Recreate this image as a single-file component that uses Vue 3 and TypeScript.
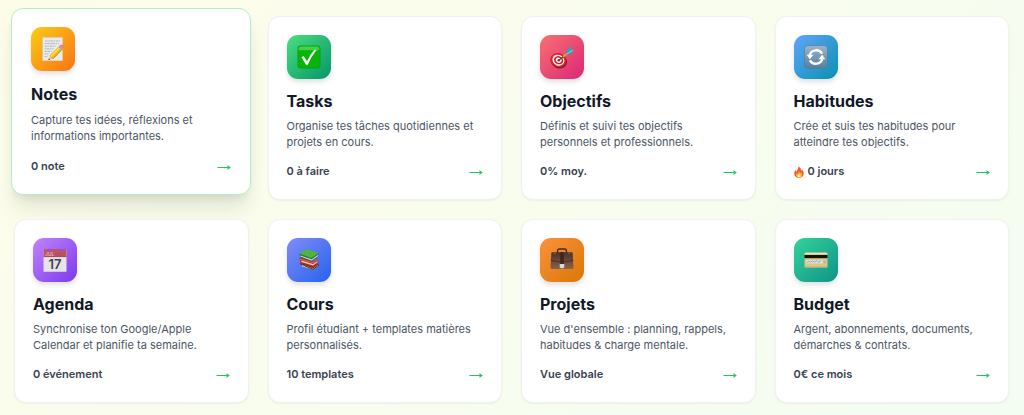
<script setup lang="ts">
type IconName = 'notes' | 'tasks' | 'goals' | 'habits' | 'agenda' | 'courses' | 'projects' | 'budget'

interface Feature {
  id: IconName
  title: string
  lines: [string, string]
  stat: string
  fire?: boolean
  active?: boolean
}

const features: Feature[] = [
  { id: 'notes', title: 'Notes', lines: ['Capture tes idées, réflexions et', 'informations importantes.'], stat: '0 note', active: true },
  { id: 'tasks', title: 'Tasks', lines: ['Organise tes tâches quotidiennes et', 'projets en cours.'], stat: '0 à faire' },
  { id: 'goals', title: 'Objectifs', lines: ['Définis et suivi tes objectifs', 'personnels et professionnels.'], stat: '0% moy.' },
  { id: 'habits', title: 'Habitudes', lines: ['Crée et suis tes habitudes pour', 'atteindre tes objectifs.'], stat: '0 jours', fire: true },
  { id: 'agenda', title: 'Agenda', lines: ['Synchronise ton Google/Apple', 'Calendar et planifie ta semaine.'], stat: '0 événement' },
  { id: 'courses', title: 'Cours', lines: ['Profil étudiant + templates matières', 'personnalisés.'], stat: '10 templates' },
  { id: 'projects', title: 'Projets', lines: ["Vue d'ensemble : planning, rappels,", 'habitudes & charge mentale.'], stat: 'Vue globale' },
  { id: 'budget', title: 'Budget', lines: ['Argent, abonnements, documents,', 'démarches & contrats.'], stat: '0€ ce mois' },
]
</script>

<template>
  <main class="page">
    <a v-for="f in features" :key="f.id" class="card" :class="{ active: f.active }" :href="'#' + f.id">
      <span class="tile" :class="f.id">
        <svg class="glyph" viewBox="0 0 24 24" aria-hidden="true">
          <template v-if="f.id === 'notes'">
            <rect x="1.6" y="0.4" width="20" height="23.4" fill="#e9eaec" stroke="#cfc9b8" stroke-width=".5" />
            <g stroke="#a3a6ab" stroke-width=".8" fill="none">
              <path stroke-dasharray="2.6 .7 1.4 .6" d="M4 4h15" />
              <path stroke-dasharray="1.4 .6 3 .7" d="M3.6 6.6h14" />
              <path stroke-dasharray="3 .6 1 .6" d="M3.6 9.2h11" />
              <path stroke-dasharray="1.6 .7 2.4 .5" d="M3.6 11.8h9" />
              <path stroke-dasharray="2.4 .7" d="M3.6 14.4h7" />
              <path stroke-dasharray="1.4 .6" d="M3.6 17h4.4" />
              <path stroke-dasharray="2 .6" d="M3.6 19.6h3" />
            </g>
            <path d="M8.6 19 7.4 23l4.8-1.2z" fill="#e8c99a" />
            <path d="m7.9 21.4-.5 1.7 1.9-.5z" fill="#333" />
            <path d="M8.5 18.6 18 9.2l3.4 3.4-9.2 9.3-2-.7z" fill="#f2b619" />
            <path d="m9.2 18.9 9.6-9.3 1.1 1.1-9.6 9.6z" fill="#ffdc4b" />
            <path d="m11.8 21.9 9.2-9.3" stroke="#b97b13" stroke-width=".7" />
            <path d="m17.4 9.8 1.5-1.4 3.3 3.3-1.5 1.5z" fill="#9daab5" />
            <path d="m18.7 8.5.8-.7c1.9-.9 4 1.2 3.2 3l-.8.9z" fill="#f07c87" />
          </template>
          <template v-else-if="f.id === 'tasks'">
            <rect x=".5" y=".5" width="23" height="23" rx="3.4" fill="#0a9b16" />
            <rect x="1.3" y="1.2" width="21.4" height="21.4" rx="2.8" fill="#05b50a" />
            <path d="M3.6 1.4h16.8q2 .3 2 2.4v1.4H1.6V3.8q0-2.1 2-2.4z" fill="#46cf43" />
            <path d="M4.4 12.3 6.6 11l3.4 5.2Q13 9.600 17.500 4.800l2 .3Q14 12 10.700 19.700H9z" fill="#fff" />
          </template>
          <template v-else-if="f.id === 'goals'">
            <ellipse cx="8.800" cy="16" rx="8.400" ry="7.300" transform="rotate(28 8.800 16)" fill="#8d1420" />
            <ellipse cx="8.200" cy="15.200" rx="8" ry="6.900" transform="rotate(28 8.200 15.200)" fill="#d8242f" />
            <ellipse cx="8.400" cy="15.200" rx="6.200" ry="5.300" transform="rotate(28 8.400 15.200)" fill="#f7f1ee" />
            <ellipse cx="8.600" cy="15.200" rx="4.700" ry="4" transform="rotate(28 8.600 15.200)" fill="#cf202d" />
            <ellipse cx="8.700" cy="15.200" rx="3" ry="2.500" transform="rotate(28 8.700 15.200)" fill="#fff" />
            <circle cx="8.800" cy="15.200" r="1.300" fill="#c51b29" />
            <path d="m9 15 6.500-4.800" stroke="#393f4b" stroke-width="1.100" />
            <path d="m13 11.800 5.300-4" stroke="#e0a72b" stroke-width="2" />
            <path d="m16.200 8.800 1-3.600 3.500-4.600.4 3.700 2.900.9-3.500 3.600-3.600 1z" fill="#28a8b9" />
            <path d="m17 8.800 5.800-3.500" stroke="#78dce3" stroke-width="1" />
          </template>
          <template v-else-if="f.id === 'habits'">
            <defs>
              <linearGradient id="habit-face" x1="0" y1="0" x2="0" y2="1">
                <stop offset="0" stop-color="#9db4c6" />
                <stop offset="1" stop-color="#557f9f" />
              </linearGradient>
            </defs>
            <rect x=".5" y=".5" width="23" height="23" rx="3.400" fill="url(#habit-face)" stroke="#547994" stroke-width=".6" />
            <g fill="none" stroke="#fff" stroke-width="2.300">
              <path d="M5.600 10.500C7 4.200 15.200 3.600 18.100 8.600" />
              <path d="M18.400 13.500C17 19.800 8.800 20.400 5.900 15.400" />
            </g>
            <path d="M2.700 9.800h6.800l-3.700 4.500zM21.300 14.200h-6.800l3.700-4.500z" fill="#fff" />
          </template>
          <template v-else-if="f.id === 'agenda'">
            <rect x=".5" y="1" width="23" height="22.800" rx=".5" fill="#e5e4e8" />
            <path d="M.5 1h23v8H.5z" fill="#bd5560" />
            <path d="M.5 8.700h23" stroke="#964450" stroke-width=".5" />
            <circle cx="6" cy="2" r="1.500" fill="#8755ed" />
            <circle cx="18" cy="2" r="1.500" fill="#8755ed" />
            <text class="month" x="2" y="8.300">JUL</text>
            <path d="M12.500 5.500h9M12.500 7.200h9" stroke="#9b4954" stroke-width=".7" stroke-dasharray="1 .7" />
            <text class="day" x="12" y="20.500">17</text>
          </template>
          <template v-else-if="f.id === 'courses'">
            <path d="m4 16.800 12 5 5.500-4v-2L9 12.500l-4.500 2z" fill="#753e26" />
            <path d="m5 16.500 11.200 3.900 4.800-3.700v1.500l-4.800 3.400L5 18.300z" fill="#e0d2bb" />
            <path d="m3 15.600 13 5.700 5.800-4.200" fill="none" stroke="#4a3028" stroke-width="1" />
            <path d="m2.500 9.200 14 4.200 3.900-2.600v5l-4.300 3.200-12.800-4.600z" fill="#b9242c" />
            <path d="m4.300 12.600 11.800 3.500 4.200-2.900v1.300L16 17.400 4.300 13.900z" fill="#e6cdbb" />
            <path d="m3 11.200 13.200 3.400 4.300-3" fill="none" stroke="#ed5048" stroke-width="1.400" />
            <path d="M2.100 5.500 9.800 1.200l11.800 3.700-7.100 5.200z" fill="#4eb53d" />
            <path d="m2 5.500 12.500 4.600 7.100-5.200v1.200l-6.700 5.200L3 7.900z" fill="#2c7c30" />
            <path d="m3.300 7.400 11.400 4.200 6.300-4.600v1.300l-6.200 4.400L3.200 8.600z" fill="#d5dcbf" />
            <path d="m3 8.900 11.600 4.400 6.600-4.600" fill="none" stroke="#246b2a" stroke-width=".8" />
          </template>
          <template v-else-if="f.id === 'projects'">
            <defs>
              <linearGradient id="case-face" x1="0" y1="0" x2="0" y2="1">
                <stop offset="0" stop-color="#4b3028" />
                <stop offset="1" stop-color="#8a6349" />
              </linearGradient>
            </defs>
            <path d="M7.600 5V2.800q0-1.700 1.700-1.700h5.400q1.700 0 1.700 1.700V5" fill="none" stroke="#4b2b23" stroke-width="1.500" />
            <path d="M1.300 5.200q0-1 1-1h19.400q1 0 1 1l.8 14.600q0 1.300-1.300 1.300H1.800q-1.300 0-1.300-1.300z" fill="url(#case-face)" />
            <path d="M.8 11.800q11.200 3.200 22.400 0v1q-11.200 3.200-22.400 0z" fill="#44302a" />
            <path d="M10.200 4h3.600v12h-3.600z" fill="#3d2723" />
            <path d="M9.700 16h4.600v3.600l-2.300.8-2.300-.8z" fill="#ddd7ce" />
            <path d="M3.800 5.500h2M18.200 5.500h2" stroke="#9a7555" stroke-width=".7" />
          </template>
          <template v-else>
            <rect x=".5" y="4.500" width="23" height="15.300" rx="1" fill="#d8c88f" />
            <path d="M.5 7h23v3.200H.5z" fill="#16110d" />
            <path d="M1.500 5.500h21" stroke="#ede2ad" stroke-width="1.300" />
            <path d="M2.300 12.200h16.500v3.200H2.300z" fill="#e1e2d8" />
            <path d="m3 14.500 2-1.200 1.500 1 2-1.200 2.200 1.200 2-1.600 2 1.600 2-1.400" fill="none" stroke="#7591b2" stroke-width=".7" />
            <path d="M19.500 13.200h2M19.500 14.700h2" stroke="#a9a184" stroke-width=".7" />
            <path d="M1 19.200h22" stroke="#ad9d68" stroke-width=".8" />
          </template>
        </svg>
      </span>
      <h3>{{ f.title }}</h3>
      <p>{{ f.lines[0] }}<br />{{ f.lines[1] }}</p>
      <span class="foot">
        <span class="stat">
          <svg v-if="f.fire" class="fire" viewBox="0 0 10 12" aria-hidden="true">
            <path d="M4.400.3C7 1.700 7 3.600 7 5q.8-.7.700-1.800C9.100 4.600 9.800 6.300 9.700 8 9.500 10.400 7.600 11.800 5 11.800S.4 10.300.3 7.900C.2 6.100 1 4.700 1.600 3.800q.1 1.500.9 2.200C2.600 4.400 4.900 2.900 4.400.3z" fill="#fb5526" />
            <path d="M5.200 4.700q-.1 1.500.9 2.600.7-.3.900-1 1.300 1.600 1.100 3C7.900 10.800 6.700 11.500 5.100 11.500c-1.800 0-3-1-3.100-2.500q0-1.300.6-2 .4 1 1.200 1.100C3.800 6.900 5 6.200 5.200 4.700z" fill="#ffb52e" />
            <path d="M5.200 7.800c.2 1 1.500 1.300 1.300 2.300-.1.800-.7 1.200-1.500 1.200s-1.500-.5-1.500-1.300C3.500 9 5 8.900 5.200 7.800z" fill="#fff09a" />
          </svg>
          {{ f.stat }}
        </span>
        <svg class="arrow" viewBox="0 0 14 8" aria-hidden="true">
          <path d="M.5 4.500h11" />
          <path class="head" d="m10.300 2 3.500 2.500L10.300 7l.5-2.500z" />
        </svg>
      </span>
    </a>
  </main>
</template>

<style>
body {
  margin: 0;
}
</style>

<style scoped>
.page {
  box-sizing: border-box;
  min-height: 100vh;
  padding: 16px 15px 11px 14px;
  display: grid;
  grid-template-columns: repeat(4, minmax(0, 1fr));
  align-content: start;
  gap: 19px;
  background: linear-gradient(135deg, #fdfce9, #f3fdf2);
  font-family: Inter, "Liberation Sans", sans-serif;
}
.card {
  display: flex;
  flex-direction: column;
  align-items: flex-start;
  padding: 18px;
  border: 1px solid #f0f1f0;
  border-radius: 12px;
  background: #fff;
  box-shadow: 0 1px 2px rgb(0 0 0 / 5%);
  color: #4b5563;
  text-decoration: none;
}
.card.active {
  margin: -8px -2px 5px -3px;
  padding: 18px 19px 17px;
  border-color: #b0f0c5;
  box-shadow: 0 16px 20px -4px rgb(40 40 20 / 11%), 0 6px 8px -4px rgb(40 40 20 / 10%);
}
.tile {
  width: 44px;
  height: 44px;
  display: grid;
  place-items: center;
  border-radius: 11px;
  box-shadow: 0 3px 5px rgb(0 0 0 / 12%);
}
.glyph {
  width: 24px;
  height: 24px;
}
.notes { background: linear-gradient(135deg, #facc15, #f97316); }
.tasks { background: linear-gradient(135deg, #4ade80, #059669); }
.goals { background: linear-gradient(135deg, #f87171, #db2777); }
.habits { background: linear-gradient(135deg, #60a5fa, #0891b2); }
.agenda { background: linear-gradient(135deg, #c084fc, #7c3aed); }
.courses { background: linear-gradient(135deg, #818cf8, #2563eb); }
.projects { background: linear-gradient(135deg, #fb923c, #d97706); }
.budget { background: linear-gradient(135deg, #34d399, #0d9488); }
.month {
  font-size: 5px;
  font-weight: 600;
  fill: #dfb0b6;
}
.day {
  font-size: 13px;
  font-weight: 600;
  fill: #42404a;
  text-anchor: middle;
}
h3 {
  margin: 11px 0 6px;
  font-size: 16px;
  line-height: 22px;
  font-weight: 700;
  color: #111827;
}
p {
  margin: 0;
  font-size: 11px;
  line-height: 16px;
  white-space: nowrap;
}
.foot {
  align-self: stretch;
  margin-top: 12px;
  display: flex;
  align-items: center;
  justify-content: space-between;
}
.active h3 {
  margin: 12px 0 7px;
}
.active .foot {
  margin-top: 13px;
}
.stat {
  display: flex;
  align-items: center;
  gap: 4px;
  font-size: 11px;
  line-height: 19px;
  font-weight: 600;
  color: #374151;
}
.fire {
  width: 10px;
  height: 12px;
}
.arrow {
  width: 14px;
  height: 8px;
  fill: none;
  stroke: #22c55e;
  stroke-width: 1;
}
.head {
  fill: #22c55e;
  stroke: none;
}
</style>
